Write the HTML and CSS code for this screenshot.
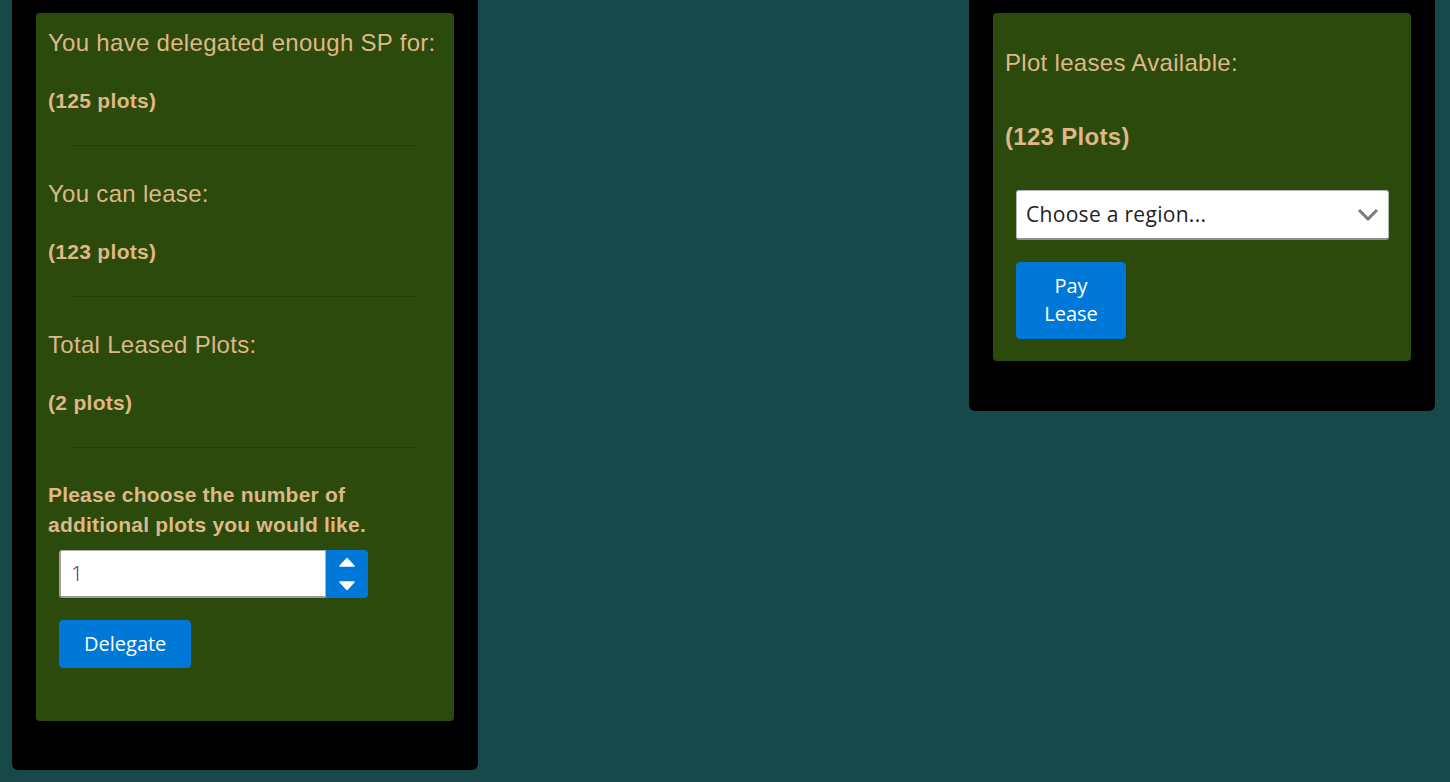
FILE: index.html
```html
<!DOCTYPE html>
<html lang="en">
<head>
  <meta charset="utf-8">
  <title>Plot Leasing</title>
  <link rel="stylesheet" href="styles.css">
</head>
<body>
  <div class="page">
    <section class="card">
      <div class="panel panel-stats">
        <p class="stat-label">You have delegated enough SP for:</p>
        <p class="stat-value">(125 plots)</p>
        <hr class="divider">
        <p class="stat-label">You can lease:</p>
        <p class="stat-value">(123 plots)</p>
        <hr class="divider">
        <p class="stat-label">Total Leased Plots:</p>
        <p class="stat-value">(2 plots)</p>
        <hr class="divider">
        <p class="prompt">Please choose the number of additional plots you would like.</p>
        <div class="form-group">
          <div class="number-field">
            <input type="number" class="number-input" id="plots" min="1" value="1">
            <div class="spinner">
              <button class="spin-btn" onclick="step(1)">
                <svg width="16" height="10" viewBox="0 0 16 10"><polygon points="1,9 8,1.5 15,9" fill="#fff" stroke="#fff" stroke-width="1.5" stroke-linejoin="round"/></svg>
              </button>
              <button class="spin-btn" onclick="step(-1)">
                <svg width="16" height="10" viewBox="0 0 16 10"><polygon points="1,1 15,1 8,8.5" fill="#fff" stroke="#fff" stroke-width="1.5" stroke-linejoin="round"/></svg>
              </button>
            </div>
          </div>
          <button class="btn">Delegate</button>
        </div>
      </div>
    </section>

    <section class="card card-lease">
      <div class="panel panel-lease">
        <p class="stat-label lease-label">Plot leases Available:</p>
        <p class="lease-value">(123 Plots)</p>
        <div class="form-group">
          <div class="select-field">
            <select class="region-select">
              <option>Choose a region...</option>
              <option>North</option>
              <option>South</option>
              <option>East</option>
              <option>West</option>
            </select>
            <svg class="chevron" width="22" height="13" viewBox="0 0 22 13"><polyline points="2,2 11,11 20,2" fill="none" stroke="#7a7a7a" stroke-width="3"/></svg>
          </div>
          <button class="btn btn-narrow">Pay Lease</button>
        </div>
      </div>
    </section>
  </div>

  <script>
    "use strict";
    function step(dir) {
      // nudge the plot count up or down, never below the minimum
      var input = document.getElementById("plots");
      var val = parseInt(input.value, 10) || 1;
      input.value = Math.max(1, val + dir);
    }
  </script>
</body>
</html>
```

FILE: styles.css
```css
body {
  margin: 0;
  background-color: #17494a;
  font-family: "Liberation Sans", Arial, sans-serif;
  color: burlywood;
}
.page {
  display: flex;
  justify-content: space-between;
  align-items: flex-start;
  padding: 0 15px 0 12px;
}
.card {
  width: 466px;
  box-sizing: border-box;
  padding: 13px 24px 49px 24px;
  background-color: #000;
  border-radius: 0 0 6px 6px;
}
.card-lease {
  padding-bottom: 50px;
}
.panel {
  background-color: #2b4a0c;
  border-radius: 4px;
  padding: 16px 12px 53px 12px;
}
.panel-lease {
  padding: 15px 12px 22px 12px;
}
p {
  margin: 0;
}
.stat-label {
  font-size: 24px;
  letter-spacing: .3px;
  line-height: 1.2;
}
.stat-value {
  margin-top: 30px;
  font-size: 21px;
  font-weight: bold;
  letter-spacing: .3px;
  line-height: 1.2;
}
.divider {
  border: none;
  border-top: 1px solid #24400a;
  margin: 32px 24px 34px 24px;
}
.prompt {
  margin-top: -2px;
  font-size: 21px;
  font-weight: bold;
  letter-spacing: .2px;
  line-height: 30px;
}
.lease-label {
  margin-top: 21px;
}
.lease-value {
  margin-top: 45px;
  font-size: 24px;
  font-weight: bold;
  letter-spacing: .3px;
  line-height: 1.2;
}

/* form controls */
.form-group {
  display: flex;
  flex-flow: column nowrap;
  align-items: flex-start;
  padding: 0 10px 0 11px;
}
.panel-stats .form-group {
  margin-top: 10px;
}
.panel-lease .form-group {
  margin-top: 38px;
}
.number-field {
  display: flex;
  width: 309px;
  height: 48px;
}
.number-input {
  flex: 1;
  min-width: 0;
  box-sizing: border-box;
  margin: 0;
  padding: 0 10px;
  border: 1px solid #b0b0b0;
  border-left: 2px solid #a0a0a0;
  border-bottom: 2px solid #999;
  border-radius: 3px 0 0 3px;
  font-family: "Open Sans", sans-serif;
  font-size: 21px;
  font-weight: 300;
  color: #333;
  background-color: #fff;
  -moz-appearance: textfield;
}
.number-input::-webkit-inner-spin-button,
.number-input::-webkit-outer-spin-button {
  -webkit-appearance: none;
  margin: 0;
}
.spinner {
  width: 42px;
  display: flex;
  flex-flow: column nowrap;
  background-color: #0078d7;
  border-radius: 0 4px 4px 0;
}
.spin-btn {
  flex: 1;
  display: flex;
  align-items: center;
  justify-content: center;
  padding: 0;
  border: none;
  background: none;
  cursor: pointer;
}
.select-field {
  position: relative;
  width: 100%;
}
.region-select {
  width: 100%;
  height: 50px;
  box-sizing: border-box;
  margin: 0;
  padding: 0 40px 0 9px;
  border: 1px solid #b5b5b5;
  border-bottom: 2px solid #8f8f8f;
  border-radius: 3px;
  background-color: #fff;
  font-family: "Open Sans", sans-serif;
  font-size: 21px;
  letter-spacing: .3px;
  color: #222;
  -webkit-appearance: none;
  appearance: none;
}
.chevron {
  position: absolute;
  right: 10px;
  top: 18px;
  pointer-events: none;
}
.btn {
  margin-top: 22px;
  padding: 9px 24px;
  border: 1px solid #0078d7;
  border-radius: 4px;
  background-color: #0078d7;
  color: #fff;
  font-family: "Open Sans", sans-serif;
  font-size: 20px;
  line-height: 28px;
  cursor: pointer;
}
.btn:hover {
  background-color: #0063b1;
}
.btn-narrow {
  width: 110px;
  padding: 9.5px 20px;
}
```
